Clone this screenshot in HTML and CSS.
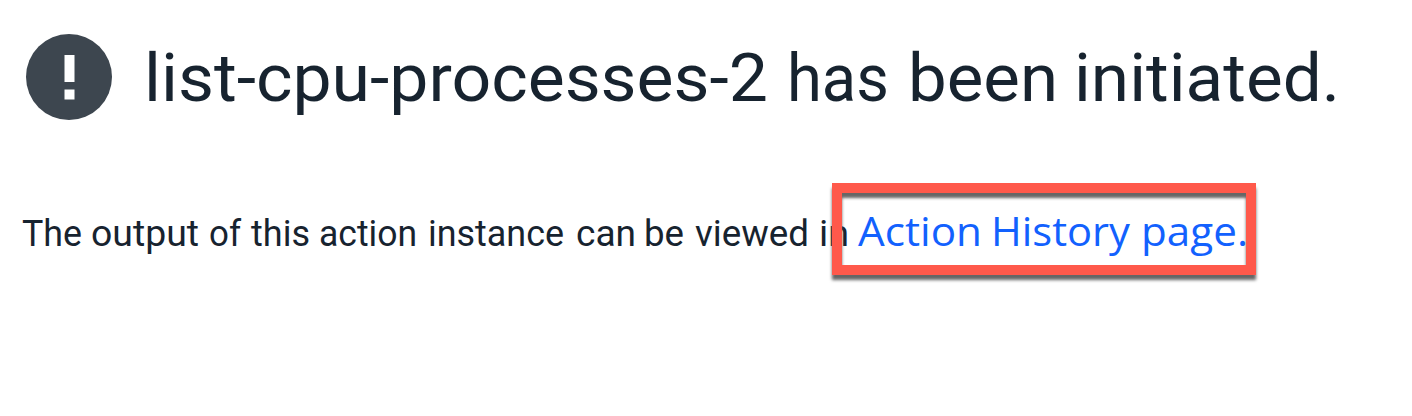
FILE: index.html
```html
<!DOCTYPE html>
<html lang="en">
<head>
<meta charset="utf-8">
<title>Action initiated</title>
<link rel="stylesheet" href="styles.css">
</head>
<body>
<main class="notice">
  <header class="notice-header">
    <svg class="notice-icon" viewBox="0 0 86 86" aria-hidden="true">
      <circle cx="43" cy="43" r="43" fill="#3d464f"/>
      <path d="M38.500 21h10v27h-10zM38.500 55.500h10v10h-10z" fill="#fff"/>
    </svg>
    <h1 class="notice-title"><svg class="line" width="1200" height="86"><text y="67"><tspan x="-2" textLength="624" lengthAdjust="spacingAndGlyphs">list-cpu-processes-2</tspan> <tspan x="641" textLength="102" lengthAdjust="spacingAndGlyphs">has</tspan> <tspan x="762" textLength="150" lengthAdjust="spacingAndGlyphs">been</tspan> <tspan x="928" textLength="266" lengthAdjust="spacingAndGlyphs">initiated.</tspan></text></svg></h1>
  </header>
  <div class="notice-body">
    <p class="message"><svg class="line" width="830" height="60"><text y="40"><tspan x="0" textLength="60" lengthAdjust="spacingAndGlyphs">The</tspan> <tspan x="69" textLength="108" lengthAdjust="spacingAndGlyphs">output</tspan> <tspan x="187" textLength="32" lengthAdjust="spacingAndGlyphs">of</tspan> <tspan x="229" textLength="59" lengthAdjust="spacingAndGlyphs">this</tspan> <tspan x="297" textLength="98" lengthAdjust="spacingAndGlyphs">action</tspan> <tspan x="406" textLength="136" lengthAdjust="spacingAndGlyphs">instance</tspan> <tspan x="554" textLength="60" lengthAdjust="spacingAndGlyphs">can</tspan> <tspan x="622" textLength="40" lengthAdjust="spacingAndGlyphs">be</tspan> <tspan x="673" textLength="114" lengthAdjust="spacingAndGlyphs">viewed</tspan> <tspan x="797" textLength="30" lengthAdjust="spacingAndGlyphs">in</tspan></text></svg></p>
    <a class="history-link" href="#"><svg class="line" width="395" height="60"><text y="40"><tspan x="0" textLength="124" lengthAdjust="spacingAndGlyphs">Action</tspan> <tspan x="133" textLength="139" lengthAdjust="spacingAndGlyphs">History</tspan> <tspan x="283" textLength="107" lengthAdjust="spacingAndGlyphs">page.</tspan></text></svg></a>
    <span class="highlight"></span>
  </div>
</main>
</body>
</html>
```
FILE: styles.css
```css
body { margin: 0; min-height: 416px; background: #fff; color: #17232f; font-family: Roboto, "Open Sans", sans-serif; }
.notice { padding: 34px 0 0 22px; }
.notice-header { display: flex; gap: 34px; padding-left: 4px; }
.notice-icon { width: 86px; height: 86px; }
.notice-title { margin: 0; font-size: 66px; font-weight: 400; }
.line { display: block; overflow: visible; fill: currentColor; }
.notice-body { position: relative; display: flex; margin-top: 86px; }
.message { margin: 0; width: 836px; font-size: 36px; }
.history-link { color: #1261fe; font-family: "Open Sans", sans-serif; font-size: 41px; text-decoration: none; }
.highlight { position: absolute; left: 810px; top: -23px; width: 404px; height: 72px; border: 10px solid #ff594b; box-shadow: 0 5px 3px #666, inset 0 5px 3px #666; }
```
